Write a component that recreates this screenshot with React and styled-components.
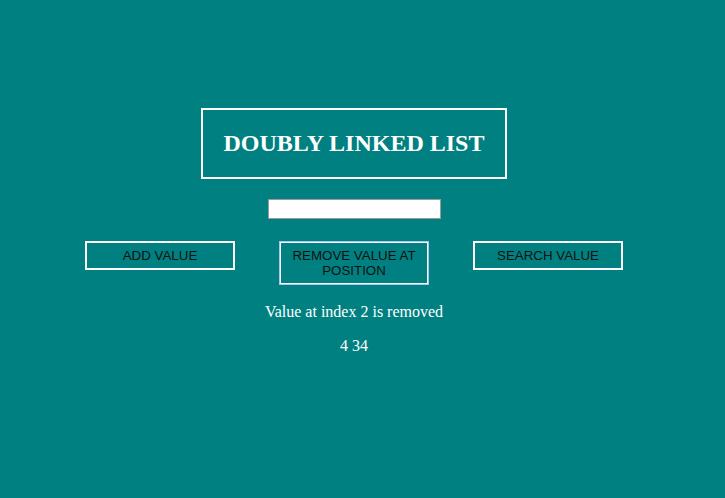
import React from 'react';
import styled, { createGlobalStyle } from 'styled-components';

const GlobalStyle = createGlobalStyle`
  html, body {
    margin: 0;
    padding: 0;
    background: #008080;
  }
  body {
    font-family: "Liberation Serif", "Times New Roman", serif;
    color: #ffffff;
  }
`;

const Page = styled.div`
  width: 708px;
  min-height: 498px;
  padding-top: 108px;
  box-sizing: border-box;
  display: flex;
  flex-direction: column;
  align-items: center;
`;

const TitleBox = styled.div`
  width: 306px;
  height: 71px;
  box-sizing: border-box;
  border: 2px solid #ffffff;
  display: flex;
  align-items: center;
  justify-content: center;
`;

const Title = styled.h1`
  margin: 0;
  font-size: 24px;
  font-weight: bold;
  color: #ffffff;
`;

const ValueInput = styled.input`
  margin-top: 20px;
  width: 173px;
  height: 20px;
  box-sizing: border-box;
  border: 1px solid #9a9a9a;
  background: #ffffff;
  padding: 0 4px;
`;

const ButtonRow = styled.div`
  margin-top: 22px;
  display: flex;
  align-items: flex-start;
  gap: 44px;
`;

const ActionButton = styled.button`
  width: 150px;
  min-height: 29px;
  box-sizing: border-box;
  padding: 5px 8px;
  background: transparent;
  border: 2px solid #ffffff;
  color: #111111;
  font-family: "Liberation Sans", Arial, sans-serif;
  font-size: 13.33px;
  line-height: 15px;
  cursor: pointer;
  outline: ${({ $focused }) => ($focused ? '1px solid #a9c6f2' : 'none')};
  outline-offset: -1px;
`;

const Message = styled.p`
  margin: 18px 0 0;
  font-size: 16px;
  line-height: 18px;
  color: #ffffff;
`;

const ListValues = styled.p`
  margin: 16px 0 0;
  font-size: 16px;
  line-height: 18px;
  color: #ffffff;
`;

const App = () => {
  const values = [4, 34];

  return (
    <>
      <GlobalStyle />
      <Page>
        <TitleBox>
          <Title>DOUBLY LINKED LIST</Title>
        </TitleBox>
        <ValueInput type="text" />
        <ButtonRow>
          <ActionButton>ADD VALUE</ActionButton>
          <ActionButton $focused>REMOVE VALUE AT POSITION</ActionButton>
          <ActionButton>SEARCH VALUE</ActionButton>
        </ButtonRow>
        <Message>Value at index 2 is removed</Message>
        <ListValues>{values.join(' ')}</ListValues>
      </Page>
    </>
  );
};

export default App;
